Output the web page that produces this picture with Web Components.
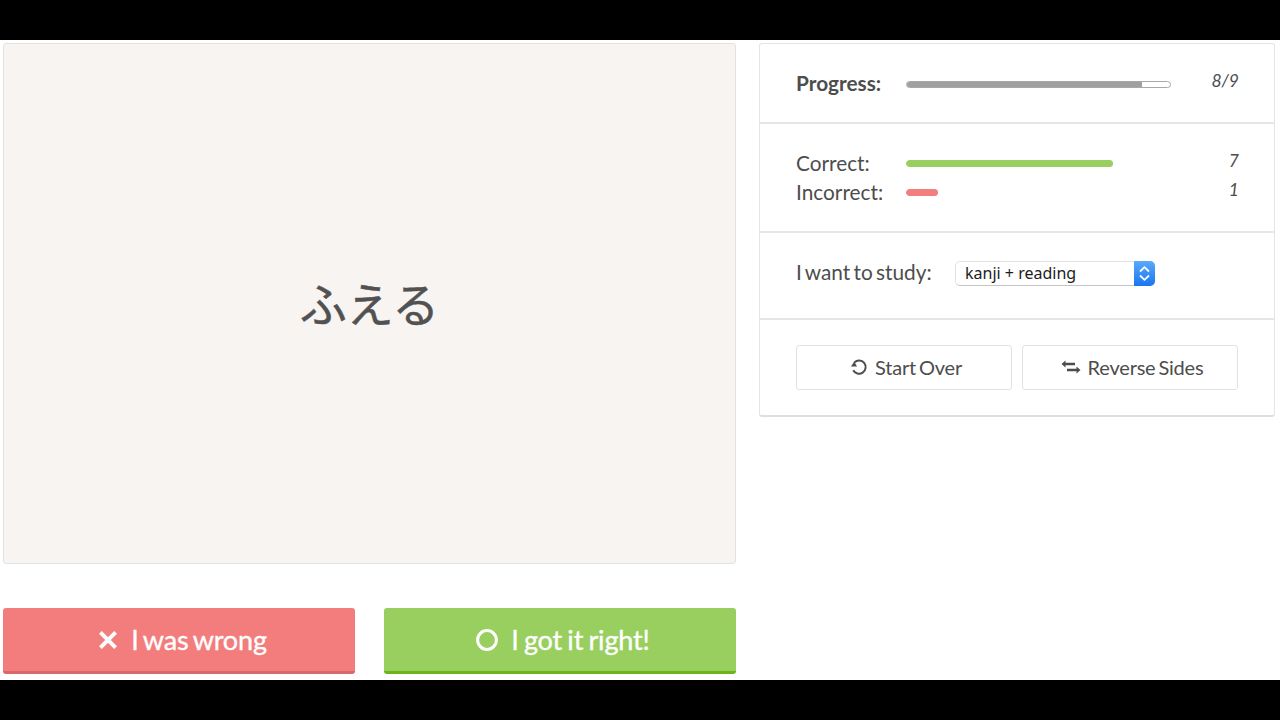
<!DOCTYPE html>
<html lang="en">
<head>
<meta charset="utf-8">
<title>Flashcards</title>
<style>
  html, body { margin: 0; padding: 0; background: #fff; }
  body { font-family: Lato, "Noto Sans CJK JP", sans-serif; color: #4d4d4d; }
</style>
</head>
<body>
<video-frame>
  <study-card>ふえる</study-card>
  <answer-button slot="answers" kind="wrong">I was wrong</answer-button>
  <answer-button slot="answers" kind="right">I got it right!</answer-button>
  <side-panel slot="side">
    <panel-row pad="24px 36px 25px 36px">
      <stat-line label="Progress:" value="8/9" strong track fill="#a0a0a0" percent="89.4"></stat-line>
    </panel-row>
    <panel-row pad="24px 36px 25px 36px">
      <stat-line label="Correct:" value="7" fill="#98cf5f" percent="78.1"></stat-line>
      <stat-line label="Incorrect:" value="1" fill="#f27e7e" percent="12.1"></stat-line>
    </panel-row>
    <panel-row pad="25px 36px 31px 36px">
      <study-picker></study-picker>
    </panel-row>
    <panel-row pad="25px 36px 25px 36px" last>
      <action-buttons></action-buttons>
    </panel-row>
  </side-panel>
</video-frame>

<script>
// marco negro de arriba y abajo, con las dos columnas dentro
class VideoFrame extends HTMLElement {
  constructor () {
    super();
    this.attachShadow({ mode: "open" });
    this.shadowRoot.innerHTML = `
      <style>
        :host { display: flex; flex-direction: column; width: 1280px; height: 720px; background: #000; }
        main { flex: none; height: 640px; margin-top: 40px; background: #fff; box-sizing: border-box;
               padding: 3px 5px 6px 3px; display: flex; gap: 23px; align-items: flex-start; }
        .left { width: 733px; flex: none; }
        .answers { display: flex; justify-content: space-between; margin-top: 44px; }
        .right { width: 516px; flex: none; }
      </style>
      <main>
        <div class="left">
          <slot></slot>
          <div class="answers"><slot name="answers"></slot></div>
        </div>
        <div class="right"><slot name="side"></slot></div>
      </main>
    `;
  }
}

class StudyCard extends HTMLElement {
  constructor () {
    super();
    this.attachShadow({ mode: "open" });
    this.shadowRoot.innerHTML = `
      <style>
        :host { display: flex; align-items: center; justify-content: center; box-sizing: border-box;
                height: 521px; background: #f8f4f1; border: 1px solid #e2e2e2; border-radius: 3px;
                font: 47px/1 "Noto Sans CJK JP", sans-serif; -webkit-text-stroke: 0.5px #515151; color: #515151; }
        span { position: relative; top: -2px; }
      </style>
      <span><slot></slot></span>
    `;
  }
}

class AnswerButton extends HTMLElement {
  constructor () {
    super();
    this.attachShadow({ mode: "open" });
    const wrong = this.getAttribute("kind") === "wrong";
    const icon = wrong
      ? `<svg width="20" height="20" viewBox="0 0 20 20"><path d="M2.4 2.4 17.6 17.6M17.6 2.4 2.4 17.6" stroke="#fff" stroke-width="4" fill="none"/></svg>`
      : `<svg width="22" height="22" viewBox="0 0 22 22"><circle cx="11" cy="11" r="9.4" stroke="#fff" stroke-width="3" fill="none"/></svg>`;
    this.shadowRoot.innerHTML = `
      <style>
        :host { display: flex; align-items: center; justify-content: center; gap: 13px;
                box-sizing: border-box; width: 352px; height: 66px; border-radius: 3px;
                padding-left: ${wrong ? 7 : 6}px; color: #fff; font: 27px/1 Lato, sans-serif;
                letter-spacing: -0.15px; word-spacing: ${wrong ? -2 : -1.5}px; -webkit-text-stroke: 0.35px #fff;
                background: ${wrong ? "#f37d7d" : "#98cf5f"};
                border-bottom: 3px solid ${wrong ? "#d9686c" : "#6cb31c"}; }
        svg { flex: none; }
      </style>
      ${icon}<span><slot></slot></span>
    `;
  }
}

class SidePanel extends HTMLElement {
  constructor () {
    super();
    this.attachShadow({ mode: "open" });
    this.shadowRoot.innerHTML = `
      <style>
        :host { display: block; box-sizing: border-box; height: 374px; background: #fff;
                border: 1px solid #e4e4e4; border-bottom: 2px solid #dedede; border-radius: 3px; }
      </style>
      <slot></slot>
    `;
  }
}

class PanelRow extends HTMLElement {
  constructor () {
    super();
    this.attachShadow({ mode: "open" });
    this.shadowRoot.innerHTML = `
      <style>
        :host { display: block; padding: ${this.getAttribute("pad")};
                ${this.hasAttribute("last") ? "" : "border-bottom: 2px solid #e6e6e6;"} }
      </style>
      <slot></slot>
    `;
  }
}

class StatLine extends HTMLElement {
  constructor () {
    super();
    this.attachShadow({ mode: "open" });
    const strong = this.hasAttribute("strong");
    const track = this.hasAttribute("track");
    this.shadowRoot.innerHTML = `
      <style>
        :host { display: grid; grid-template-columns: 110px 265px 1fr; align-items: center; height: 29px;
                font: 20.8px/29px Lato, sans-serif; color: #4d4d4d; }
        .label { font-weight: ${strong ? 700 : 400}; }
        .bar { height: 7px; box-sizing: border-box; border-radius: 4px; overflow: hidden; position: relative; top: ${strong ? 2 : 1}px;
               ${track ? "background: #fff; border: 1px solid #a8a8a8;" : ""} }
        .fill { height: 100%; width: ${this.getAttribute("percent")}%; background: ${this.getAttribute("fill")};
                border-radius: ${track ? "0" : "4px"}; }
        .value { text-align: right; font-style: italic; font-size: 17.5px; position: relative; top: -2px; left: 1px; }
      </style>
      <span class="label">${this.getAttribute("label")}</span>
      <div class="bar"><div class="fill"></div></div>
      <span class="value">${this.getAttribute("value")}</span>
    `;
  }
}

class StudyPicker extends HTMLElement {
  constructor () {
    super();
    this.attachShadow({ mode: "open" });
    this.shadowRoot.innerHTML = `
      <style>
        :host { display: flex; align-items: center; height: 29px; font: 20.8px/29px Lato, sans-serif; word-spacing: -2px; color: #4d4d4d; }
        .label { width: 159px; flex: none; position: relative; top: -1px; }
        .select { width: 200px; height: 25px; margin-top: 2px; box-sizing: border-box; display: flex; border-radius: 5px;
                  background: #fff; border: 1px solid #e2e2e2; border-bottom-color: #c4c4c4; word-spacing: 0; }
        .text { flex: 1; padding-left: 9px; font: 16px/23px "Noto Sans", "Open Sans", sans-serif; color: #1c1c1c; }
        .arrows { width: 21px; margin: -1px; margin-left: 0; border-radius: 0 5px 5px 0; display: flex; align-items: center; justify-content: center;
                  background: linear-gradient(#5aa9fa, #1a76f0); }
      </style>
      <span class="label">I want to study:</span>
      <div class="select">
        <span class="text">kanji + reading</span>
        <span class="arrows">
          <svg width="13" height="17" viewBox="0 0 13 17"><path d="M2 6.500 6.500 2.200 11 6.500M2 10.500 6.500 14.800 11 10.500" stroke="#fff" stroke-width="1.8" fill="none"/></svg>
        </span>
      </div>
    `;
  }
}

class ActionButtons extends HTMLElement {
  constructor () {
    super();
    this.attachShadow({ mode: "open" });
    this.shadowRoot.innerHTML = `
      <style>
        :host { display: grid; grid-template-columns: 216px 216px; gap: 10px; }
        .btn { height: 45px; box-sizing: border-box; padding: 0 0 2px 4px; display: flex; align-items: center; justify-content: center; gap: 7px;
               border: 1px solid #e2e2e2; border-radius: 3px; background: #fff;
               font: 20px/1 Lato, sans-serif; letter-spacing: -0.2px; word-spacing: -2px; color: #4d4d4d; }
        svg { flex: none; }
      </style>
      <div class="btn">
        <svg width="18" height="18" viewBox="0 0 18 18" fill="none" stroke="#4d4d4d" stroke-width="2">
          <path d="M4.400 4.400A6.600 6.600 0 1 1 3.200 12.200"/><path d="M1 8.600H7L4.200 3.600Z" fill="#4d4d4d" stroke="none"/>
        </svg>
        <span>Start Over</span>
      </div>
      <div class="btn">
        <svg width="20" height="18" viewBox="0 0 20 18" fill="#4d4d4d" stroke="none">
          <path d="M4.500 2.500 .5 6l4 3.500V7.300H14V4.800H4.500z"/><path d="M15.500 8.500 19.500 12l-4 3.500v-2.200H6v-2.500h9.500z"/>
        </svg>
        <span>Reverse Sides</span>
      </div>
    `;
  }
}

customElements.define("video-frame", VideoFrame);
customElements.define("study-card", StudyCard);
customElements.define("answer-button", AnswerButton);
customElements.define("side-panel", SidePanel);
customElements.define("panel-row", PanelRow);
customElements.define("stat-line", StatLine);
customElements.define("study-picker", StudyPicker);
customElements.define("action-buttons", ActionButtons);
</script>
</body>
</html>
